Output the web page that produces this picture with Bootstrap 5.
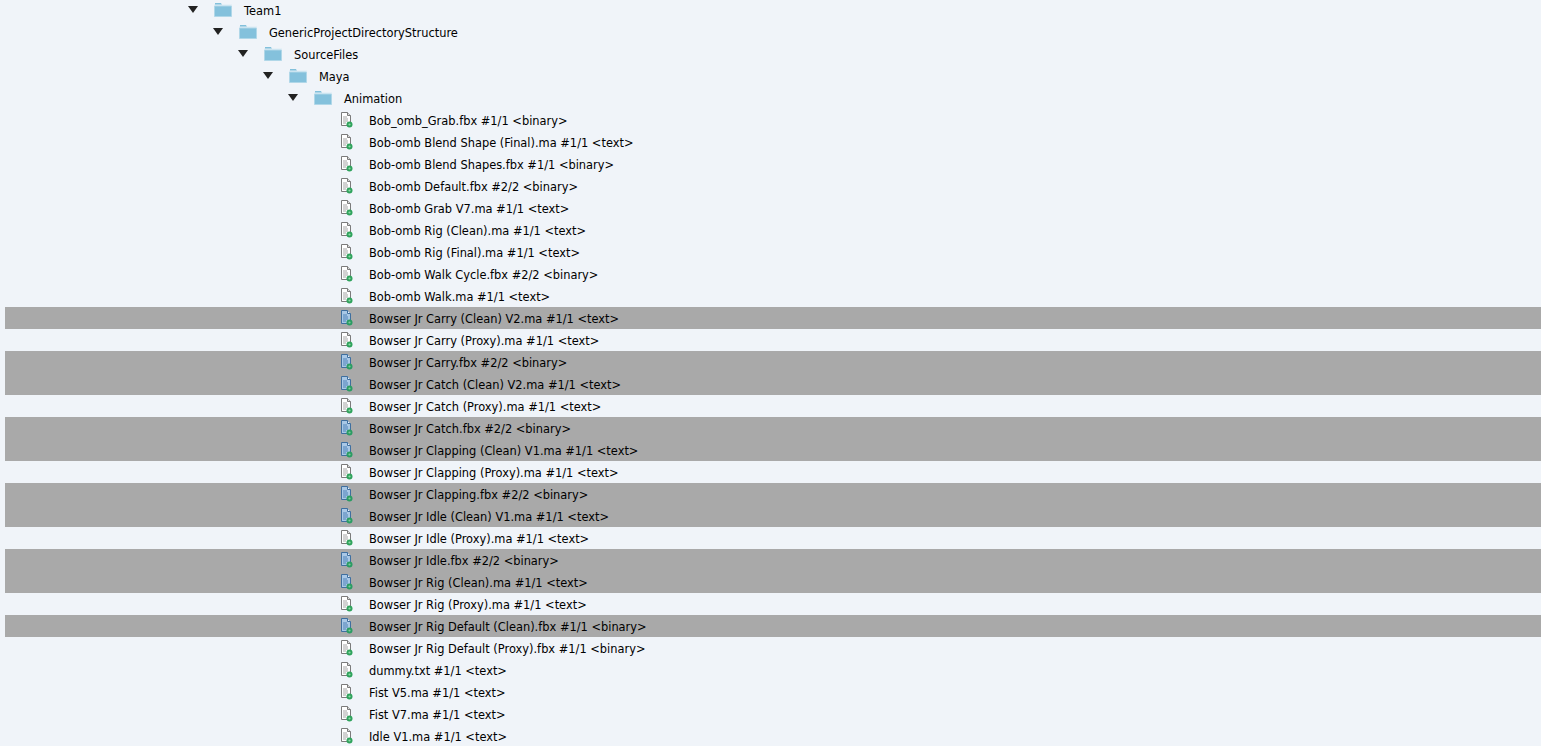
<!DOCTYPE html>
<html lang="en">
<head>
  <meta charset="UTF-8">
  <title>Depot tree</title>
  <link href="https://cdn.jsdelivr.net/npm/bootstrap@5.3.0/dist/css/bootstrap.min.css" rel="stylesheet">
  <style>
    html, body { height: 100%; overflow: hidden; background: #f0f4f9; }
    .tree-box { margin: -1px 0 0 5px; font-family: "DejaVu Sans", sans-serif; font-size: 11.42px; color: #000; }
    .tree-row { height: 22px; white-space: nowrap; }
    .tree-row.picked { background: #a9a9a9; }
    .tree-arrow { width: 0; height: 0; flex: none; margin-right: 16px; margin-top: -2px; border-left: 5px solid transparent; border-right: 5px solid transparent; border-top: 7px solid #222; }
    .ico-folder { flex: none; margin-right: 12px; }
    .ico-file { flex: none; margin-right: 12px; }
    .tree-label { padding-top: 4px; }
    .lvl-0 { padding-left: 183px; }
    .lvl-1 { padding-left: 208px; }
    .lvl-2 { padding-left: 233px; }
    .lvl-3 { padding-left: 258px; }
    .lvl-4 { padding-left: 283px; }
    .lvl-5 { padding-left: 336px; }
  </style>
</head>
<body>
  <div class="tree-box" id="tree"></div>

  <svg class="d-none">
    <symbol id="folder" viewBox="0 0 18 14">
      <path d="M1 2V0h6l1 2z" fill="#82c0db"/>
      <path d="M0 2h18" stroke="#dcedf5" stroke-width="1"/>
      <path d="M.5 13.5V3h17v10.5z" fill="#84c1dc" stroke="#b0d7e8"/>
    </symbol>
    <symbol id="doc" viewBox="0 0 16 16">
      <path d="M.5 .5h6l3 3v10h-9z" fill="#fff" stroke="#7b7b7b"/>
      <path d="M6.5 .5v3h3" fill="#ddd" stroke="#7b7b7b"/>
      <path d="M2 5h4M2 7h5M2 9h5M2 11h3" stroke="#a5a5a5"/>
      <circle cx="8.5" cy="12.5" r="3" fill="#2fa35c"/>
      <circle cx="8.5" cy="12.5" r="1.1" fill="#8fd8a8"/>
    </symbol>
    <symbol id="docsel" viewBox="0 0 16 16">
      <path d="M.5 .5h6l3 3v10h-9z" fill="#a9c8e6" stroke="#3f6f9f"/>
      <path d="M6.5 .5v3h3" fill="#eaf2fa" stroke="#3f6f9f"/>
      <path d="M2 5h4M2 7h5M2 9h5M2 11h3" stroke="#4f82b8"/>
      <circle cx="8.5" cy="12.5" r="3" fill="#2a9c62"/>
      <circle cx="8.5" cy="12.5" r="1.1" fill="#7fc79c"/>
    </symbol>
  </svg>

  <script>
    const folders = ['Team1', 'GenericProjectDirectoryStructure', 'SourceFiles', 'Maya', 'Animation'];
    const files = [
      ['Bob_omb_Grab.fbx #1/1 <binary>', 0],
      ['Bob-omb Blend Shape (Final).ma #1/1 <text>', 0],
      ['Bob-omb Blend Shapes.fbx #1/1 <binary>', 0],
      ['Bob-omb Default.fbx #2/2 <binary>', 0],
      ['Bob-omb Grab V7.ma #1/1 <text>', 0],
      ['Bob-omb Rig (Clean).ma #1/1 <text>', 0],
      ['Bob-omb Rig (Final).ma #1/1 <text>', 0],
      ['Bob-omb Walk Cycle.fbx #2/2 <binary>', 0],
      ['Bob-omb Walk.ma #1/1 <text>', 0],
      ['Bowser Jr Carry (Clean) V2.ma #1/1 <text>', 1],
      ['Bowser Jr Carry (Proxy).ma #1/1 <text>', 0],
      ['Bowser Jr Carry.fbx #2/2 <binary>', 1],
      ['Bowser Jr Catch (Clean) V2.ma #1/1 <text>', 1],
      ['Bowser Jr Catch (Proxy).ma #1/1 <text>', 0],
      ['Bowser Jr Catch.fbx #2/2 <binary>', 1],
      ['Bowser Jr Clapping (Clean) V1.ma #1/1 <text>', 1],
      ['Bowser Jr Clapping (Proxy).ma #1/1 <text>', 0],
      ['Bowser Jr Clapping.fbx #2/2 <binary>', 1],
      ['Bowser Jr Idle (Clean) V1.ma #1/1 <text>', 1],
      ['Bowser Jr Idle (Proxy).ma #1/1 <text>', 0],
      ['Bowser Jr Idle.fbx #2/2 <binary>', 1],
      ['Bowser Jr Rig (Clean).ma #1/1 <text>', 1],
      ['Bowser Jr Rig (Proxy).ma #1/1 <text>', 0],
      ['Bowser Jr Rig Default (Clean).fbx #1/1 <binary>', 1],
      ['Bowser Jr Rig Default (Proxy).fbx #1/1 <binary>', 0],
      ['dummy.txt #1/1 <text>', 0],
      ['Fist V5.ma #1/1 <text>', 0],
      ['Fist V7.ma #1/1 <text>', 0],
      ['Idle V1.ma #1/1 <text>', 0]
    ];

    const tree = document.getElementById('tree');

    folders.forEach((name, i) => {
      const row = document.createElement('div');
      row.className = 'tree-row d-flex align-items-center lvl-' + i;
      row.innerHTML = '<span class="tree-arrow"></span><svg class="ico-folder" width="18" height="14"><use href="#folder"/></svg><span class="tree-label"></span>';
      row.lastChild.textContent = name;
      tree.appendChild(row);
    });

    files.forEach(([name, picked]) => {
      const row = document.createElement('div');
      row.className = 'tree-row d-flex align-items-center lvl-5' + (picked ? ' picked' : '');
      row.innerHTML = '<svg class="ico-file" width="16" height="16"><use href="' + (picked ? '#docsel' : '#doc') + '"/></svg><span class="tree-label"></span>';
      row.lastChild.textContent = name;
      tree.appendChild(row);
    });
  </script>
  <script src="https://cdn.jsdelivr.net/npm/bootstrap@5.3.0/dist/js/bootstrap.bundle.min.js"></script>
</body>
</html>
